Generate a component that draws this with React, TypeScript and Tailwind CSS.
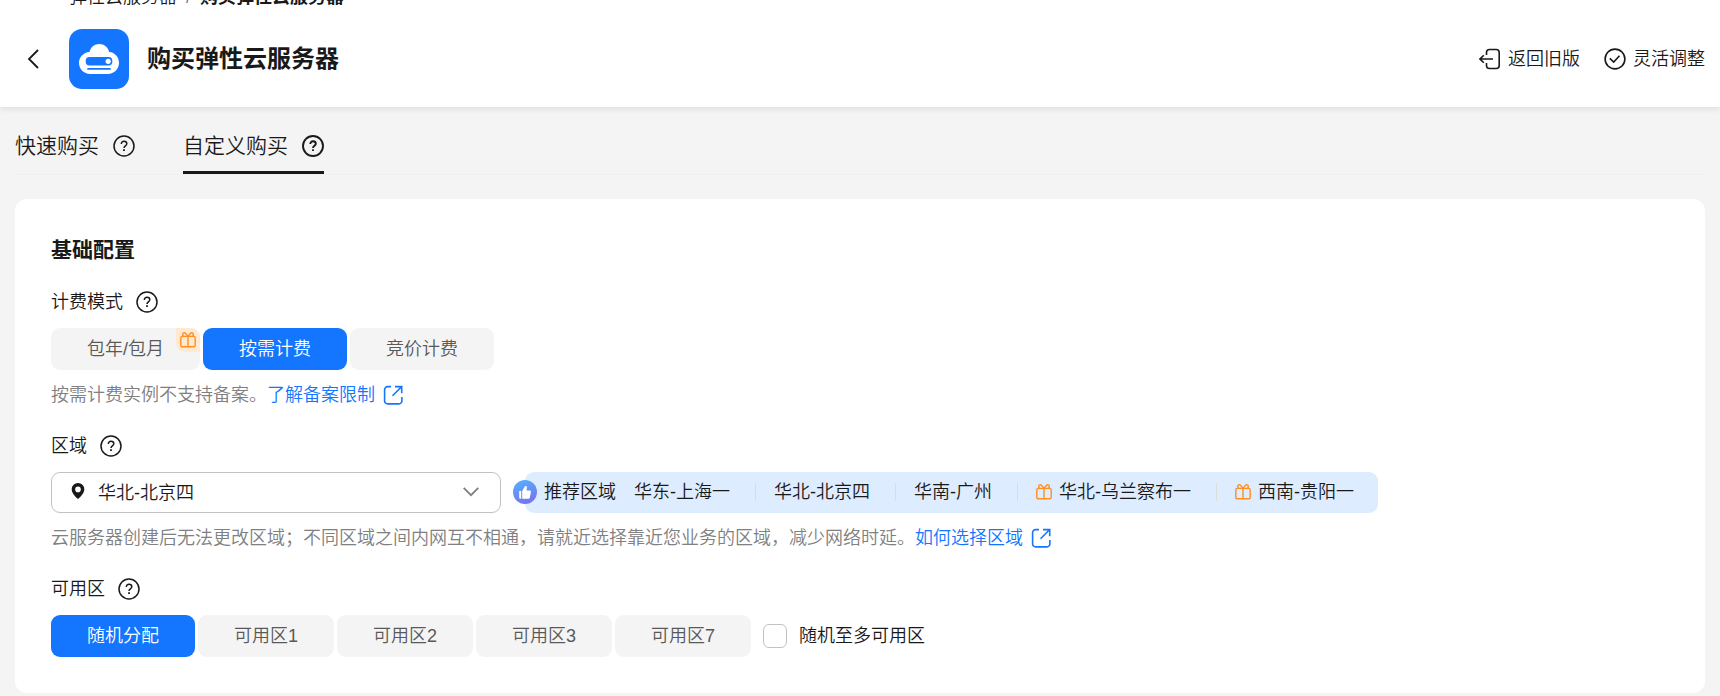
import { useState, type ReactNode } from 'react';

const BILLING = [
  { id: 'period', label: '包年/包月', gift: true },
  { id: 'ondemand', label: '按需计费', gift: false },
  { id: 'spot', label: '竞价计费', gift: false },
];

const REGIONS = [
  { name: '华东-上海一', gift: false },
  { name: '华北-北京四', gift: false },
  { name: '华南-广州', gift: false },
  { name: '华北-乌兰察布一', gift: true },
  { name: '西南-贵阳一', gift: true },
];

const ZONES = ['随机分配', '可用区1', '可用区2', '可用区3', '可用区7'];

function HelpIcon({ bold = false }: { bold?: boolean }) {
  return (
    <svg viewBox="0 0 22 22" fill="none" stroke="currentColor" strokeWidth={bold ? 1.9 : 1.5} className="size-[22px] shrink-0">
      <circle cx="11" cy="11" r="10" />
      <path d="M8.3 9.1c0-1.6 1.1-2.8 2.7-2.8s2.8 1.1 2.8 2.5c0 1.9-2.8 2.1-2.8 4.1" />
      <path d="M11 14.2v1.9" strokeWidth="1.8" />
    </svg>
  );
}

function GiftIcon() {
  return (
    <svg viewBox="0 0 16 16" fill="none" stroke="#ff8f1f" strokeWidth="1.4" strokeLinejoin="round" className="size-4 shrink-0">
      <rect x="0.8" y="4.4" width="14.4" height="10.4" rx="1.4" />
      <path d="M8 4.4v10.4" />
      <path d="M8 4.4 5.4 1.3C4.4.3 2.7.9 2.7 2.4c0 .9.4 1.5 1 2M8 4.4l2.600-3.100c1-1 2.700-.4 2.700 1.100 0 .9-.4 1.500-1 2" />
    </svg>
  );
}

function ExternalIcon() {
  return (
    <svg viewBox="0 0 20 20" fill="none" stroke="currentColor" strokeWidth="1.6" className="size-5 shrink-0">
      <path d="M8 1.6H4.6A3 3 0 0 0 1.6 4.600v11.300a3 3 0 0 0 3 3h11.300a3 3 0 0 0 3-3V12" />
      <path d="M12 1.600h6.700v6.700M18.500 1.800 9.500 10.800" />
    </svg>
  );
}

function Logo() {
  return (
    <svg viewBox="0 0 60 60" className="size-[60px] shrink-0">
      <rect width="60" height="60" rx="13" fill="#1476ff" />
      <path d="M20.5 22.900C21.600 18.200 25.500 15 30.300 15s8.700 3.200 9.900 7.900C46 23.400 50 28 50 33.800 50 40.200 45.200 45 38.800 45H21.200C14.800 45 10 40.200 10 33.800c0-5.800 4.400-10.400 10.500-10.900Z" fill="#fff" />
      <rect x="16.700" y="28" width="26.600" height="8.500" rx="3.800" fill="#1476ff" />
      <circle cx="39.200" cy="32.300" r="2.600" fill="#fff" />
      <path d="M19 39.900h22" stroke="#1476ff" strokeWidth="1.700" strokeLinecap="round" />
    </svg>
  );
}

function ThumbIcon() {
  return (
    <svg viewBox="0 0 24 24" className="size-6">
      <defs>
        <linearGradient id="thumb" x1="0.3" y1="0" x2="0.7" y2="1">
          <stop offset="0" stopColor="#58aefc" />
          <stop offset="1" stopColor="#7670ee" />
        </linearGradient>
      </defs>
      <circle cx="12" cy="12" r="12" fill="url(#thumb)" />
      <path d="M6.200 11h2v7.800H7.200a1 1 0 0 1-1-1ZM9.200 11l2.300-4c.3-1 .8-1.200 1.400-1 .9.300 1.200 1.100 1 2l-.5 2.400h3.300c.9 0 1.400.7 1.200 1.500l-1 5.400c-.2 1-.8 1.500-1.700 1.500h-6Z" fill="#fff" />
    </svg>
  );
}

function FieldLabel({ children }: { children: ReactNode }) {
  return (
    <div className="flex h-6 items-center gap-[13px]">
      <span>{children}</span>
      <HelpIcon />
    </div>
  );
}

function HintLink({ children }: { children: ReactNode }) {
  return (
    <a href="#" className="flex items-center gap-2 text-[#1476ff]">
      {children}
      <ExternalIcon />
    </a>
  );
}

function Segment({ active, onClick, children }: { active: boolean; onClick: () => void; children: ReactNode }) {
  return (
    <button
      type="button"
      aria-pressed={active}
      onClick={onClick}
      className={`relative h-[42px] rounded-[9px] px-9 ${active ? 'bg-[#1476ff] text-white' : 'bg-[#f4f4f4] text-[#595959]'}`}
    >
      {children}
    </button>
  );
}

export default function App() {
  const [tab, setTab] = useState('custom');
  const [billing, setBilling] = useState('ondemand');
  const [region, setRegion] = useState('华北-北京四');
  const [zone, setZone] = useState('随机分配');

  return (
    <div className="min-h-screen overflow-hidden bg-[#f4f4f4] font-['Liberation_Sans','Noto_Sans_CJK_SC',sans-serif] text-[18px] leading-6 font-[350] text-[#191919]">
      <header className="bg-white pr-[15px] pb-[18px] pl-[69px] shadow-[0_2px_6px_rgba(0,0,0,0.09)]">
        <nav className="-mt-[17px] flex h-7 items-center gap-[9px]">
          <a href="#">弹性云服务器</a>
          <span className="text-[#808080]">/</span>
          <span className="font-bold">购买弹性云服务器</span>
        </nav>
        <div className="mt-[18px] flex items-center">
          <button type="button" aria-label="返回" className="-ml-[43px] mr-[29px]">
            <svg viewBox="0 0 14 22" fill="none" stroke="currentColor" strokeWidth="1.8" className="h-[22px] w-[14px]">
              <path d="M12 2 3 11l9 9" />
            </svg>
          </button>
          <Logo />
          <h1 className="ml-[18px] text-2xl font-bold">购买弹性云服务器</h1>
          <div className="ml-auto flex items-center gap-6">
            <button type="button" className="flex items-center gap-[7px]">
              <svg viewBox="0 0 22 22" fill="none" stroke="currentColor" strokeWidth="1.6" className="size-[22px]">
                <path d="M7.500 7V4.500a3 3 0 0 1 3-3h6.700a3 3 0 0 1 3 3v13a3 3 0 0 1-3 3h-6.700a3 3 0 0 1-3-3V15" />
                <path d="M14 11H1M4.800 7.200 1 11l3.800 3.800" />
              </svg>
              返回旧版
            </button>
            <button type="button" className="flex items-center gap-[7px]">
              <svg viewBox="0 0 22 22" fill="none" stroke="currentColor" strokeWidth="1.6" className="size-[22px]">
                <circle cx="11" cy="11" r="9.9" />
                <path d="m5.800 10.300 3.900 3.700 5.800-6.200" />
              </svg>
              灵活调整
            </button>
          </div>
        </div>
      </header>

      <main className="px-[15px]">
        <div className="flex gap-12 border-b border-[#efefef] text-[21px] leading-[22px]">
          <button
            type="button"
            onClick={() => setTab('quick')}
            className={`flex items-center gap-[14px] border-b-[3px] pt-7 pb-[14px] ${tab === 'quick' ? 'border-[#191919]' : 'border-transparent'}`}
          >
            快速购买
            <HelpIcon bold={tab === 'quick'} />
          </button>
          <button
            type="button"
            onClick={() => setTab('custom')}
            className={`flex items-center gap-[14px] border-b-[3px] pt-7 pb-[14px] ${tab === 'custom' ? 'border-[#191919]' : 'border-transparent'}`}
          >
            自定义购买
            <HelpIcon bold={tab === 'custom'} />
          </button>
        </div>

        <div className="mt-6 flex flex-col gap-[27px] rounded-xl bg-white p-9">
          <section>
            <h2 className="mb-[25px] text-[21px] leading-[30px] font-bold">基础配置</h2>
            <FieldLabel>计费模式</FieldLabel>
            <div className="mt-[14px] flex gap-[3px]">
              {BILLING.map(b => (
                <Segment key={b.id} active={billing === b.id} onClick={() => setBilling(b.id)}>
                  {b.label}
                  {b.gift && (
                    <span className="absolute top-0 right-0 flex size-6 items-center justify-center rounded-tr-[9px] rounded-bl-[9px] bg-[#ffe9d1]">
                      <GiftIcon />
                    </span>
                  )}
                </Segment>
              ))}
            </div>
            <div className="mt-[13px] flex text-[#808080]">
              <p>按需计费实例不支持备案。</p>
              <HintLink>了解备案限制</HintLink>
            </div>
          </section>

          <section>
            <FieldLabel>区域</FieldLabel>
            <div className="mt-[14px] flex gap-3">
              <div className="relative w-[450px]">
                <svg viewBox="0 0 14 16" className="pointer-events-none absolute top-[11px] left-5 h-4 w-[14px]">
                  <path fillRule="evenodd" d="M7 0a6.3 6.3 0 0 1 6.3 6.3C13.3 10 10 13.5 7 16 4 13.5.7 10 .7 6.3A6.3 6.3 0 0 1 7 0Zm0 3.6a2.8 2.8 0 1 0 0 5.600 2.800 2.800 0 0 0 0-5.600Z" fill="#191919" />
                </svg>
                <select
                  aria-label="区域"
                  value={region}
                  onChange={e => setRegion(e.target.value)}
                  className="h-[41px] w-full appearance-none rounded-[9px] border border-[#c2c2c2] bg-transparent pl-[46px]"
                >
                  {REGIONS.map(r => <option key={r.name}>{r.name}</option>)}
                </select>
                <svg viewBox="0 0 16 10" fill="none" stroke="#808080" strokeWidth="1.8" className="pointer-events-none absolute top-[15px] right-[22px] h-[10px] w-4">
                  <path d="m.7.8 7.3 7.4L15.3.8" />
                </svg>
              </div>
              <div className="flex items-center">
                <span className="relative -mr-3 pb-0.5"><ThumbIcon /></span>
                <div className="flex h-[41px] items-center rounded-[9px] bg-[#deecff] pr-6 pb-0.5 pl-[19px]">
                  <span className="mr-[18px]">推荐区域</span>
                  {REGIONS.map((r, i) => (
                    <div key={r.name} className="flex items-center">
                      {i > 0 && <span className="mr-[18px] ml-[25px] h-[18px] w-px bg-[#dcdcdc]" />}
                      <button type="button" onClick={() => setRegion(r.name)} className="flex items-center gap-[7px]">
                        {r.gift && <GiftIcon />}
                        {r.name}
                      </button>
                    </div>
                  ))}
                </div>
              </div>
            </div>
            <div className="mt-[13px] flex text-[#808080]">
              <p>云服务器创建后无法更改区域；不同区域之间内网互不相通，请就近选择靠近您业务的区域，减少网络时延。</p>
              <HintLink>如何选择区域</HintLink>
            </div>
          </section>

          <section>
            <FieldLabel>可用区</FieldLabel>
            <div className="mt-[14px] flex items-center gap-[3px]">
              {ZONES.map(z => (
                <Segment key={z} active={zone === z} onClick={() => setZone(z)}>{z}</Segment>
              ))}
              <label className="ml-[9px] flex items-center gap-3">
                <input type="checkbox" className="size-6 appearance-none rounded-md border border-[#c2c2c2] checked:bg-[#1476ff]" />
                随机至多可用区
              </label>
            </div>
          </section>
        </div>
      </main>
    </div>
  );
}
